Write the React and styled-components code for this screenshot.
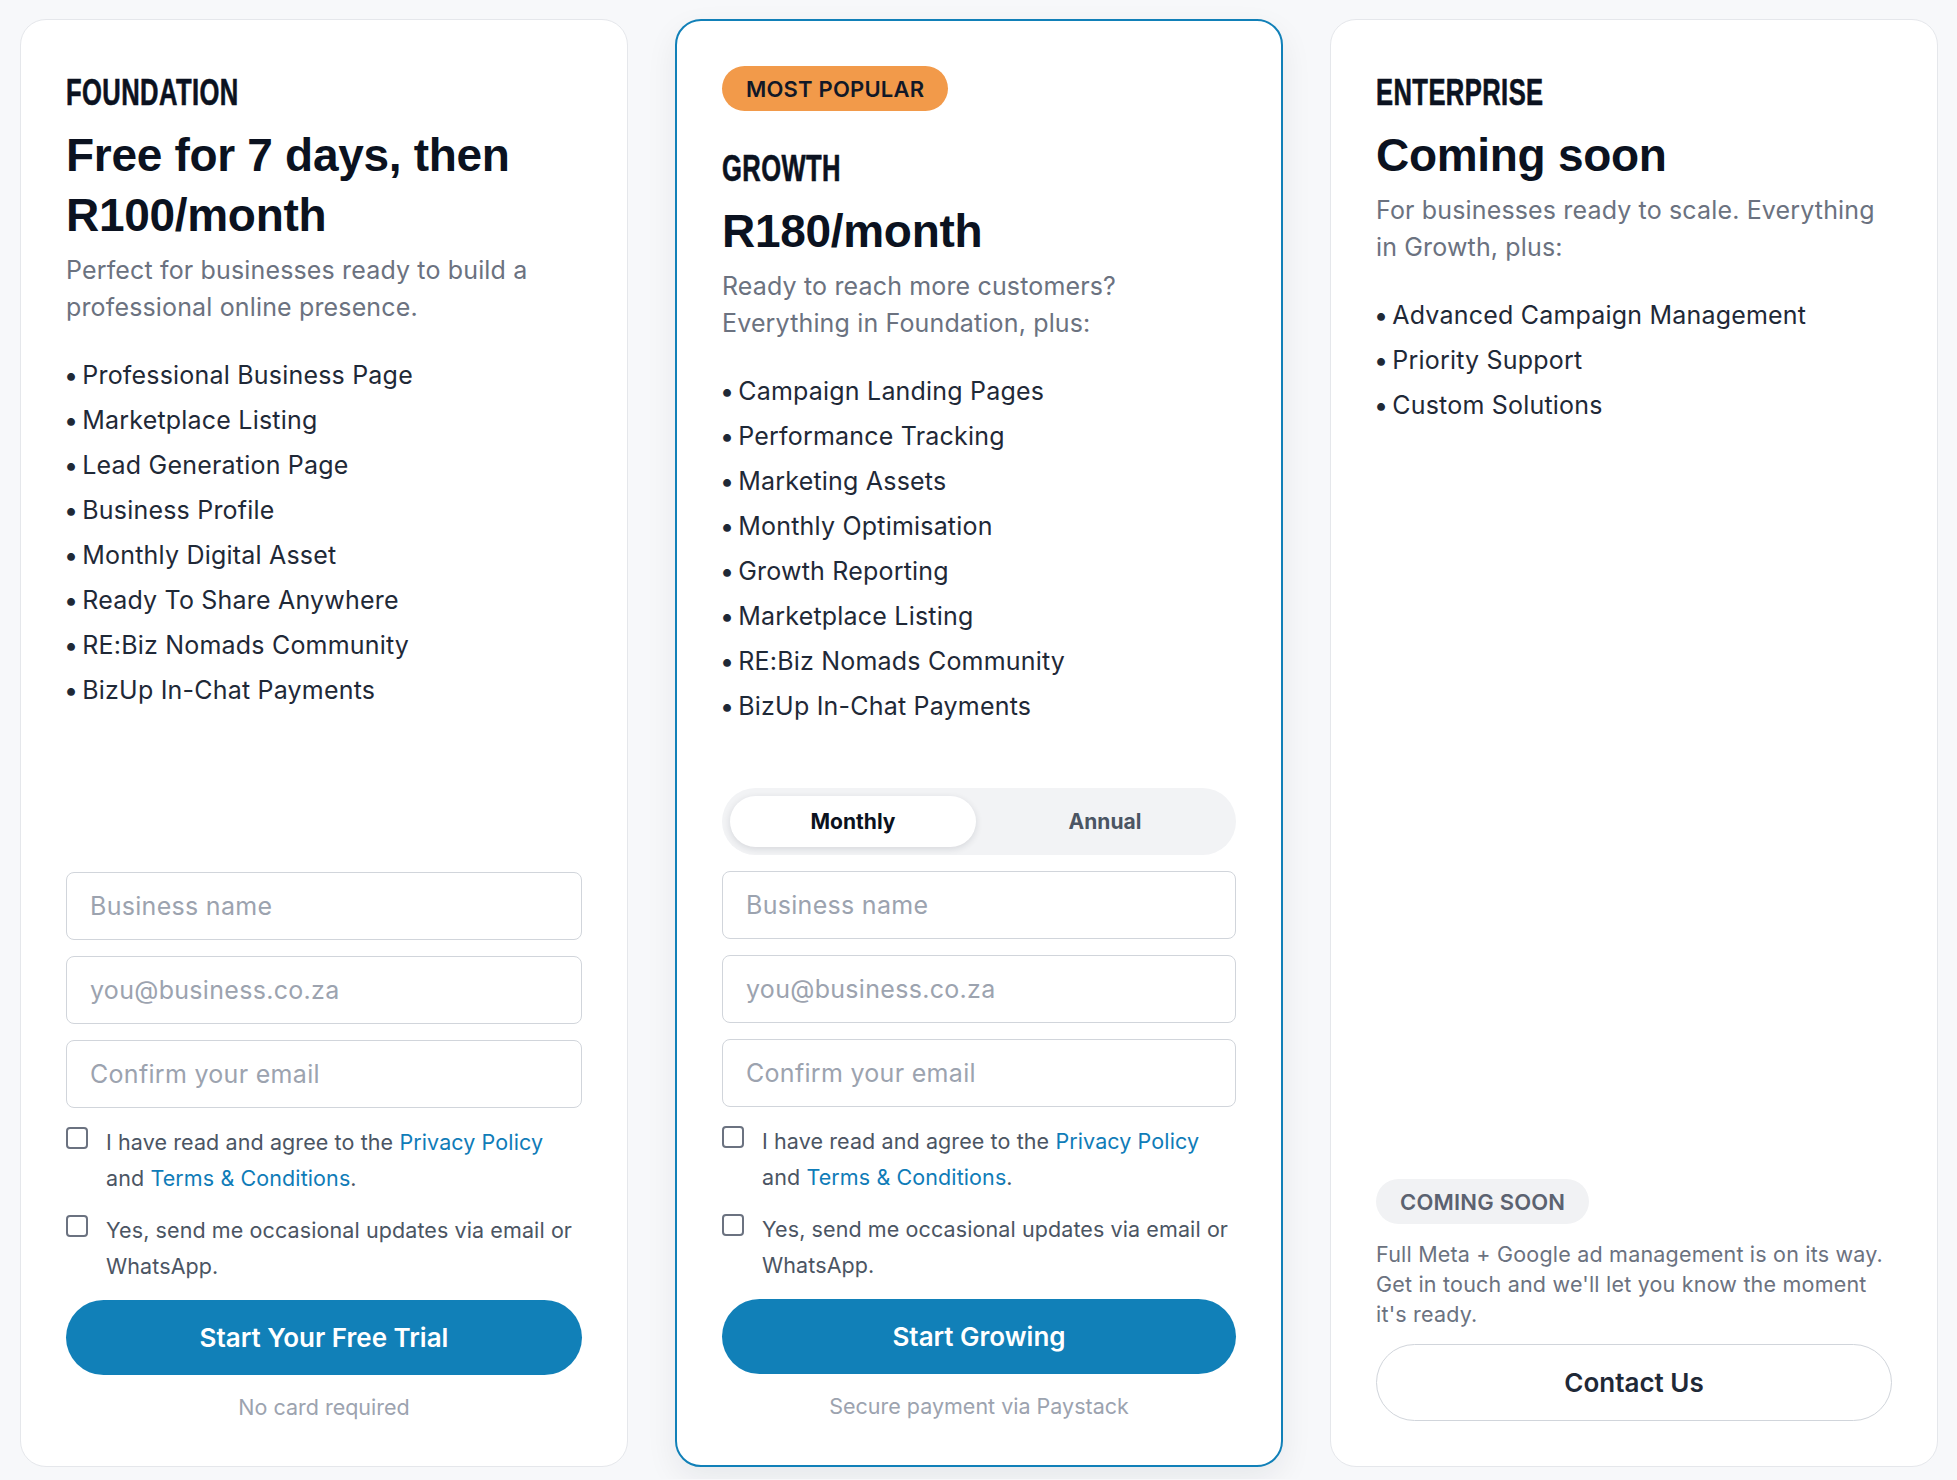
import React from 'react';
import styled, { createGlobalStyle, css } from 'styled-components';

const GlobalStyle = createGlobalStyle`
  *, *::before, *::after {
    box-sizing: border-box;
  }

  html,
  body {
    margin: 0;
    padding: 0;
    background: #f7f8fa;
  }

  body {
    font-family: Inter, "Noto Sans", sans-serif;
    color: #1f2937;
    -webkit-font-smoothing: antialiased;
  }
`;

const Page = styled.main`
  display: grid;
  grid-template-columns: repeat(3, 1fr);
  gap: 47px;
  padding: 19px 19px 12px 20px;
  align-items: stretch;
`;

const Card = styled.section`
  display: flex;
  flex-direction: column;
  background: #fff;
  border: 1px solid #e5e7eb;
  border-radius: 26px;
  padding: 45px;

  ${(p) =>
    p.$featured &&
    css`
      border: 2px solid #1180b8;
      box-shadow: 0 12px 32px rgba(15, 23, 42, 0.07);
    `}
`;

const Pill = styled.span`
  align-self: flex-start;
  display: inline-flex;
  align-items: center;
  height: 45px;
  padding: 0 24px;
  border-radius: 999px;
  font-size: 22px;
  font-weight: 600;
  letter-spacing: 0.2px;
  text-transform: uppercase;
  background: ${(p) => (p.$tone === 'muted' ? '#f1f2f4' : '#f29a4a')};
  color: ${(p) => (p.$tone === 'muted' ? '#5b6270' : '#111827')};
`;

const PopularPill = styled(Pill)`
  margin-bottom: 30px;
`;

/* tall, tightly set display face for the tier label */
const TierName = styled.h2`
  margin: 6px 0 0;
  font-family: "Liberation Sans", Arial, sans-serif;
  font-size: 36px;
  line-height: 44px;
  font-weight: 700;
  letter-spacing: 0.6px;
  color: #0b1220;
  text-transform: uppercase;
  -webkit-text-stroke: 0.6px #0b1220;
  transform: scaleX(0.71);
  transform-origin: left center;
`;

const Price = styled.h3`
  margin: 10px 0 0;
  font-family: "Liberation Sans", Arial, sans-serif;
  font-size: 46px;
  line-height: 60px;
  font-weight: 700;
  color: #0b1220;
  letter-spacing: -0.3px;
`;

const Blurb = styled.p`
  margin: 7px 0 0;
  font-size: 25px;
  line-height: 37px;
  letter-spacing: 0.15px;
  color: #6b7280;
`;

const Features = styled.ul`
  list-style: none;
  margin: 27px 0 0;
  padding: 0;
`;

const Feature = styled.li`
  font-size: 25px;
  line-height: 45px;
  letter-spacing: 0.2px;
  color: #1f2937;

  &::before {
    content: '•';
    margin: 0 4px 0 -2px;
  }
`;

const Bottom = styled.div`
  margin-top: auto;
  padding-top: 59px;
  display: flex;
  flex-direction: column;
  gap: 16px;
`;

const Toggle = styled.div`
  display: grid;
  grid-template-columns: 1fr 1fr;
  gap: 6px;
  padding: 8px;
  height: 67px;
  border-radius: 999px;
  background: #f2f3f5;
`;

const ToggleOption = styled.button`
  border: 0;
  border-radius: 999px;
  font-family: inherit;
  font-size: 21px;
  font-weight: 700;
  cursor: pointer;
  background: ${(p) => (p.$active ? '#fff' : 'transparent')};
  color: ${(p) => (p.$active ? '#0b1220' : '#4b5563')};
  box-shadow: ${(p) => (p.$active ? '0 2px 7px rgba(15, 23, 42, 0.12)' : 'none')};
`;

const Field = styled.input`
  display: block;
  width: 100%;
  height: 68px;
  padding: 0 23px;
  border: 1px solid #d1d5db;
  border-radius: 8px;
  background: #fff;
  font-family: inherit;
  font-size: 25px;
  letter-spacing: 0.3px;
  color: #111827;
  outline: none;

  &::placeholder {
    color: #9ca3af;
  }
`;

const CheckRow = styled.label`
  display: flex;
  align-items: flex-start;
  gap: 18px;
  font-size: 21.5px;
  line-height: 36px;
  letter-spacing: 0.1px;
  color: #4b5563;
`;

const Box = styled.input.attrs({ type: 'checkbox' })`
  appearance: none;
  flex-shrink: 0;
  width: 22px;
  height: 22px;
  margin: 3px 0 0;
  border: 2px solid #6b7280;
  border-radius: 4px;
  background: #fff;
`;

const Link = styled.a`
  color: #0f7cb8;
  text-decoration: none;
`;

const PrimaryButton = styled.button`
  height: 75px;
  border: 0;
  border-radius: 999px;
  background: #1180b8;
  color: #fff;
  font-family: inherit;
  font-size: 26px;
  font-weight: 600;
  cursor: pointer;
`;

const Note = styled.p`
  margin: 2px 0 0;
  text-align: center;
  font-size: 21.5px;
  line-height: 28px;
  color: #9ca3af;
`;

const SoonBlock = styled.div`
  margin-top: auto;
  display: flex;
  flex-direction: column;
`;

const SoonText = styled.p`
  margin: 15px 0 0;
  font-size: 21.5px;
  line-height: 30px;
  letter-spacing: 0.2px;
  color: #6b7280;
`;

const OutlineButton = styled.button`
  margin-top: 15px;
  height: 77px;
  border: 1px solid #d1d5db;
  border-radius: 999px;
  background: #fff;
  color: #1f2937;
  font-family: inherit;
  font-size: 26px;
  font-weight: 600;
  cursor: pointer;
`;

const plans = [
  {
    id: 'foundation',
    name: 'Foundation',
    price: 'Free for 7 days, then R100/month',
    blurb: 'Perfect for businesses ready to build a professional online presence.',
    features: [
      'Professional Business Page',
      'Marketplace Listing',
      'Lead Generation Page',
      'Business Profile',
      'Monthly Digital Asset',
      'Ready To Share Anywhere',
      'RE:Biz Nomads Community',
      'BizUp In-Chat Payments',
    ],
    cta: 'Start Your Free Trial',
    note: 'No card required',
  },
  {
    id: 'growth',
    name: 'Growth',
    featured: true,
    price: 'R180/month',
    blurb: 'Ready to reach more customers? Everything in Foundation, plus:',
    features: [
      'Campaign Landing Pages',
      'Performance Tracking',
      'Marketing Assets',
      'Monthly Optimisation',
      'Growth Reporting',
      'Marketplace Listing',
      'RE:Biz Nomads Community',
      'BizUp In-Chat Payments',
    ],
    cta: 'Start Growing',
    note: 'Secure payment via Paystack',
  },
];

function SignupForm({ plan }) {
  return (
    <Bottom>
      {plan.featured && (
        <Toggle>
          <ToggleOption $active>Monthly</ToggleOption>
          <ToggleOption>Annual</ToggleOption>
        </Toggle>
      )}
      <Field placeholder="Business name" />
      <Field type="email" placeholder="you@business.co.za" />
      <Field type="email" placeholder="Confirm your email" />
      <CheckRow>
        <Box />
        <span>
          I have read and agree to the <Link href="#privacy">Privacy Policy</Link> and{' '}
          <Link href="#terms">Terms &amp; Conditions</Link>.
        </span>
      </CheckRow>
      <CheckRow>
        <Box />
        <span>Yes, send me occasional updates via email or WhatsApp.</span>
      </CheckRow>
      <PrimaryButton>{plan.cta}</PrimaryButton>
      <Note>{plan.note}</Note>
    </Bottom>
  );
}

function PlanCard({ plan }) {
  return (
    <Card $featured={plan.featured}>
      {plan.featured && <PopularPill>Most Popular</PopularPill>}
      <TierName>{plan.name}</TierName>
      <Price>{plan.price}</Price>
      <Blurb>{plan.blurb}</Blurb>
      <Features>
        {plan.features.map((f) => (
          <Feature key={f}>{f}</Feature>
        ))}
      </Features>
      <SignupForm plan={plan} />
    </Card>
  );
}

export default function App() {
  return (
    <>
      <GlobalStyle />
      <Page>
        {plans.map((plan) => (
          <PlanCard key={plan.id} plan={plan} />
        ))}
        <Card>
          <TierName>Enterprise</TierName>
          <Price>Coming soon</Price>
          <Blurb>For businesses ready to scale. Everything in Growth, plus:</Blurb>
          <Features>
            <Feature>Advanced Campaign Management</Feature>
            <Feature>Priority Support</Feature>
            <Feature>Custom Solutions</Feature>
          </Features>
          <SoonBlock>
            <Pill $tone="muted">Coming soon</Pill>
            <SoonText>
              Full Meta + Google ad management is on its way. Get in touch and we'll let you
              know the moment it's ready.
            </SoonText>
            <OutlineButton>Contact Us</OutlineButton>
          </SoonBlock>
        </Card>
      </Page>
    </>
  );
}
